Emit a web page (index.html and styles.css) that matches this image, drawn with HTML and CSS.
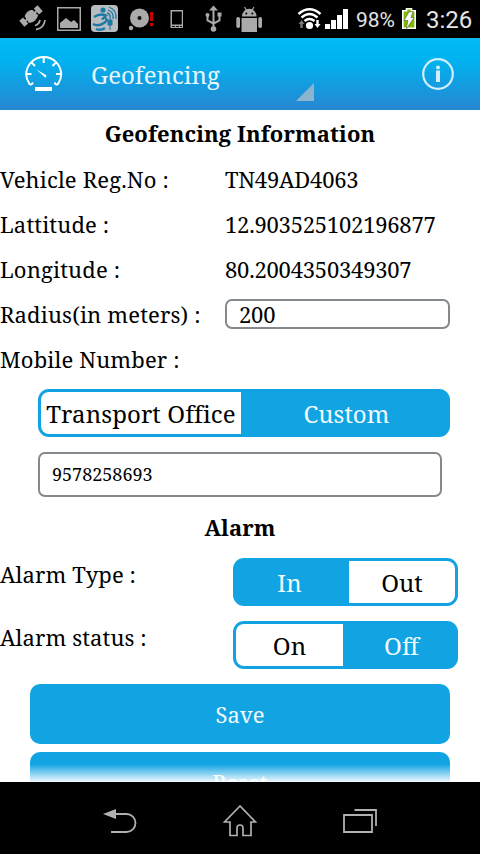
FILE: index.html
```html
<!DOCTYPE html>
<html lang="en">
<head>
<meta charset="utf-8">
<title>Geofencing</title>
<link rel="stylesheet" href="styles.css">
</head>
<body>
<div class="status">
  <svg class="status-icons" width="480" height="38" viewBox="0 0 480 38">
    <g fill="#aaa">
      <g transform="translate(31 16) rotate(-40)">
        <path d="M-5 -4q5-3 10 0l1 8q-6 4-12 0zM-4 -6"/>
        <path d="M-12 -4h5v8h-5zM7 -4h5v8h-5z"/>
        <path d="M-8 0h16" stroke="#aaa" stroke-width="2"/>
      </g>
      <path d="M35 25.500q4-1 5-5.500M36 29.500q8-1 9-9.500" fill="none" stroke="#aaa" stroke-width="1.800"/>
      <path d="M57 7h24v24h-24zM58.500 8.500v21h21v-21z" fill-rule="evenodd"/>
      <path d="M60 28v-5l6-5 5 4 3-2 4 4v4z"/>
      <rect x="91" y="5" width="27" height="27" rx="4" fill="#b9bdbf"/>
      <circle cx="103" cy="10" r="2.600" fill="#1d79a6"/>
      <path d="M94 17q6-4 12-1.500l-4 4M93 24q5 3 11-1 5-3 1-5M96 29q5 2 9-1" fill="none" stroke="#1d79a6" stroke-width="2.400"/>
      <path d="M107 13q4 1 3 6M108 10q6 2 5 9M109 7q8 3 7 12" fill="none" stroke="#1d79a6" stroke-width="1.300"/>
      <path d="M108 20h4v5h-4zM110 25v5" fill="#1d79a6" stroke="#1d79a6"/>
      <circle cx="139.500" cy="18" r="9.500"/><circle cx="139.500" cy="18" r="2" fill="#111"/><circle cx="131" cy="28" r="2.200"/>
      <path d="M150 12h3v9h-3zM150 23h3v3h-3z" fill="#c00"/>
      <path d="M170.500 10h12.500v18h-12.500zM172 11.500v13h9.800v-13z" fill-rule="evenodd"/>
      <path d="M172 26.500h10" stroke="#111" stroke-dasharray="3 1"/>
      <path d="M213.500 5.500l4.500 5h-9z"/><circle cx="213.500" cy="29" r="2.800"/><circle cx="207.500" cy="15" r="2"/><path d="M217.500 12.500h4v4h-4z"/>
      <path d="M213.500 9v19M207.500 16v4.500l6 3M219.500 15v5.500l-6 3" fill="none" stroke="#aaa" stroke-width="2"/>
      <path d="M242 16.500a7 7.500 0 0 1 14.500 0zM241.500 18h15.500v14h-15.500z"/>
      <path d="M244.500 7l2.500 4M254 7l-2.500 4" stroke="#aaa" stroke-width="1.200"/>
      <circle cx="246.300" cy="13.500" r="1" fill="#000"/><circle cx="252.300" cy="13.500" r="1" fill="#000"/>
      <rect x="236.300" y="17" width="3.700" height="11" rx="1.700"/><rect x="258.300" y="17" width="3.700" height="11" rx="1.700"/>
    </g>
    <g fill="none" stroke="#fff" stroke-width="2.400">
      <path d="M298.500 14q11-9.500 22 0M301.500 17.500q8-7 16 0M304.500 21q5-4 10 0"/>
    </g>
    <circle cx="309.500" cy="25.500" r="3.600" fill="#fff"/>
    <path d="M301.500 20l3 4h-1.800v4h-2.400v-4h-1.800z" fill="#777"/>
    <path d="M317.500 28l3-4h-1.800v-4h-2.400v4h-1.800z" fill="#fff"/>
    <path d="M325 24h5v5h-5zM331 20h5v9h-5zM337 15h5v14h-5zM343 9h5v20h-5z" fill="#fff"/>
    <path d="M402.800 10.800h3.700v-2h5v2h3.700v17.500h-12.400z" fill="#7fb800" stroke="#fff" stroke-width="1.600"/>
    <path d="M409 12l4-.5-2 6h3l-8 12 2-9h-4z" fill="#fff" stroke="#555" stroke-width=".6"/>
  </svg>
  <span class="percent">98%</span><span class="clock">3:26</span>
</div>
<header class="header">
  <svg class="gauge" width="38" height="36" viewBox="0 0 38 36">
    <path d="M8 26.500Q6.500 29.500 4.500 28Q1.200 23 1.200 18.500A17.500 17.500 0 0 1 36.200 18.500Q36.200 23 33 28Q31 29.500 29.500 26.500M18.700 1v6M6.500 6.500l3.500 3.500M31 6.500l-3.500 3.500M1 18h5.500M36.500 18h-5.500" fill="none" stroke="#fff" stroke-width="2"/>
    <path d="M11.500 13.500l9.500 5.500q1 2-1 2.500z" fill="#fff"/>
    <rect x="10" y="31" width="17" height="4" fill="#fff"/>
  </svg>
  <h1 class="title">Geofencing</h1>
  <svg class="corner" width="18" height="18" viewBox="0 0 18 18"><path d="M18 0v18H0z" fill="#8db4cf"/></svg>
  <svg class="info" width="32" height="32" viewBox="0 0 32 32">
    <circle cx="16" cy="16" r="14.800" fill="none" stroke="#d3eefb" stroke-width="2.200"/>
    <circle cx="16" cy="9.500" r="2" fill="#d3eefb"/><path d="M14 12.500h4v11.500h-4z" fill="#d3eefb"/>
  </svg>
</header>
<main class="content">
  <h2 class="heading">Geofencing Information</h2>
  <dl class="details">
    <dt>Vehicle Reg.No :</dt><dd>TN49AD4063</dd>
    <dt>Lattitude :</dt><dd>12.903525102196877</dd>
    <dt>Longitude :</dt><dd>80.2004350349307</dd>
    <dt>Radius(in meters) :</dt><dd><div class="field radius">200</div></dd>
    <dt>Mobile Number :</dt><dd></dd>
  </dl>
  <div class="segment source"><span class="choice off">Transport Office</span><span class="choice">Custom</span></div>
  <div class="field mobile">9578258693</div>
  <h2 class="heading alarm">Alarm</h2>
  <div class="option"><span class="label">Alarm Type :</span><div class="segment type"><span class="choice">In</span><span class="choice off">Out</span></div></div>
  <div class="option"><span class="label">Alarm status :</span><div class="segment state"><span class="choice off">On</span><span class="choice">Off</span></div></div>
  <div class="button">Save</div>
  <div class="button">Reset</div>
</main>
<nav class="nav">
  <svg width="34" height="26" viewBox="0 0 34 26"><path d="M0 6L13 1v10z" fill="#b0b0b0"/><path d="M13 6h10.500a9 9 0 0 1 0 18H8" fill="none" stroke="#b0b0b0" stroke-width="1.800"/></svg>
  <svg width="34" height="32" viewBox="0 0 34 32"><path d="M17 1L1.500 17H7v13.500h7V23a3 3 0 0 1 6 0v7.500h8V17h4.500z" fill="none" stroke="#b0b0b0" stroke-width="1.700"/></svg>
  <svg width="34" height="24" viewBox="0 0 34 24"><path d="M1 6h28v17H1zM11.500 1h21.500v16" fill="none" stroke="#b0b0b0" stroke-width="1.800"/></svg>
</nav>
</body>
</html>
```
FILE: styles.css
```css
* { box-sizing: border-box; }
body { margin: 0; width: 480px; height: 854px; overflow: hidden; display: flex; flex-direction: column; background: #fff; color: #000; font-family: "Noto Serif", "Droid Serif", "DejaVu Serif Condensed", "DejaVu Serif", serif; font-size: 22px; line-height: 30px; }
h1, h2, dl, dd { margin: 0; }
svg { display: block; flex: none; }
.status { position: relative; height: 38px; flex: none; background: #000; color: #e4e4e4; display: flex; align-items: center; justify-content: flex-end; padding: 2px 9px 0 0; font-family: Roboto, sans-serif; }
.status-icons { position: absolute; inset: 0; }
.percent { font-size: 21px; width: 70px; white-space: nowrap; }
.clock { font-size: 24px; width: 45px; white-space: nowrap; }
.header { height: 72px; flex: none; display: flex; align-items: center; padding: 0 26px 0 25px; background: linear-gradient(#1cb7ec 0, #00b9f5 2px, #00b3f0 22px, #2786d0 100%); }
.title { width: 205px; margin-left: 28px; padding-top: 1px; color: #e8f7fe; font-size: 24px; font-weight: 400; }
.corner { align-self: flex-end; margin-bottom: 9px; }
.info { margin-left: auto; }
.content { position: relative; height: 672px; flex: none; overflow: hidden; }
.content::after { content: ""; position: absolute; left: 0; right: 0; bottom: 0; height: 18px; background: linear-gradient(rgba(255,255,255,0), rgba(255,255,255,.94)); }
.heading { height: 48px; padding-top: 8px; text-align: center; font-size: 22px; font-weight: 700; letter-spacing: .1px; }
.details { display: grid; grid-template-columns: 225px 225px; grid-auto-rows: 45px; white-space: nowrap; }
.details dt, .details dd { padding-top: 6px; }
.details dt { letter-spacing: .15px; }
.details dd { letter-spacing: -.22px; }
.field { border: 2px solid #84898e; border-radius: 7px; background: #fff; }
.radius { height: 30px; padding-left: 12px; line-height: 27px; }
.segment { display: flex; height: 48px; flex: none; padding: 3px; border-radius: 11px; background: #11a3e2; color: #f1faff; font-size: 24px; line-height: 43px; text-align: center; white-space: nowrap; }
.choice { flex: 1; }
.choice.off { background: #fff; color: #000; }
.choice.off:first-child { border-radius: 8px 0 0 8px; }
.choice.off:last-child { border-radius: 0 8px 8px 0; }
.source { width: 412px; margin: 6px 0 0 38px; }
.source .choice:first-child { flex: 0 0 200px; letter-spacing: .1px; }
.source .choice:last-child { padding-left: 5px; }
.mobile { width: 404px; height: 45px; margin: 15px 0 0 38px; padding-left: 12px; font-size: 18px; line-height: 41px; }
.alarm { height: 61px; padding-top: 15px; }
.option { display: flex; height: 63px; }
.label { width: 233px; padding-top: 1px; letter-spacing: .1px; }
.type, .state { width: 225px; }
.type .choice:first-child { flex: 0 0 113px; padding-right: 6px; }
.state .choice:first-child { flex: 0 0 107px; }
.state .choice:last-child { padding-left: 5px; }
.button { width: 420px; height: 60px; margin: 0 0 8px 30px; border-radius: 10px; background: #11a3e2; color: #f1faff; text-align: center; line-height: 61px; }
.nav { height: 72px; flex: none; background: #000; display: flex; align-items: center; justify-content: space-between; padding: 6px 103px 0; }
```
